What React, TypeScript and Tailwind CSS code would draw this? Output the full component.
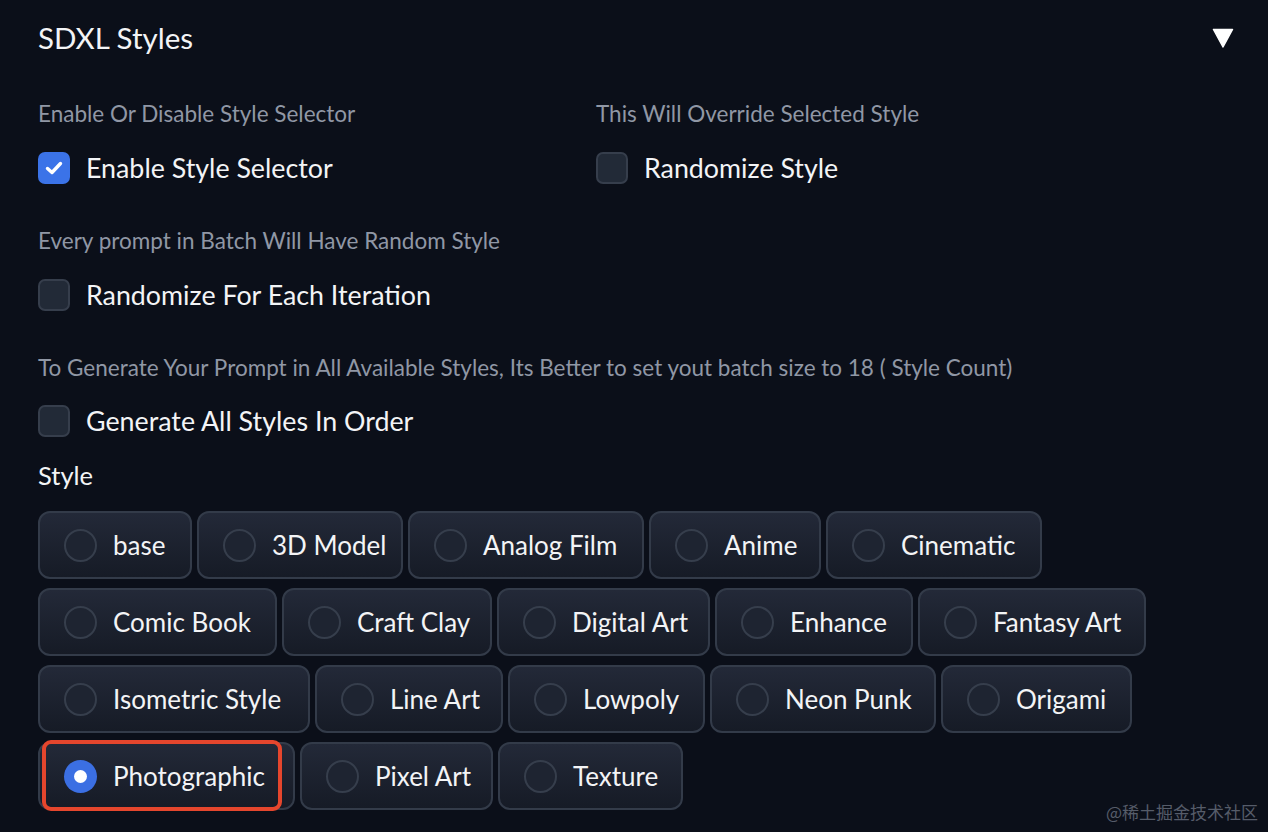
import React from "react";

const rows: { label: string; w: number; selected?: boolean }[][] = [
  [
    { label: "base", w: 154 },
    { label: "3D Model", w: 206 },
    { label: "Analog Film", w: 236 },
    { label: "Anime", w: 172 },
    { label: "Cinematic", w: 216 },
  ],
  [
    { label: "Comic Book", w: 239 },
    { label: "Craft Clay", w: 210 },
    { label: "Digital Art", w: 213 },
    { label: "Enhance", w: 198 },
    { label: "Fantasy Art", w: 228 },
  ],
  [
    { label: "Isometric Style", w: 272 },
    { label: "Line Art", w: 188 },
    { label: "Lowpoly", w: 197 },
    { label: "Neon Punk", w: 226 },
    { label: "Origami", w: 191 },
  ],
  [
    { label: "Photographic", w: 257, selected: true },
    { label: "Pixel Art", w: 193 },
    { label: "Texture", w: 185 },
  ],
];

function Checkbox({ checked }: { checked?: boolean }) {
  if (checked) {
    return (
      <div className="w-[32px] h-[32px] rounded-[7px] bg-[#3b73e8] flex items-center justify-center shrink-0">
        <svg width="22" height="22" viewBox="0 0 22 22" fill="none">
          <path d="M4.5 11.5 L9 15.5 L17.5 6.5" stroke="white" strokeWidth="3.4" strokeLinecap="round" strokeLinejoin="round" />
        </svg>
      </div>
    );
  }
  return <div className="w-[32px] h-[32px] rounded-[7px] bg-[#222a37] border-2 border-[#363e4c] shrink-0" />;
}

function CheckRow({ label, checked }: { label: string; checked?: boolean }) {
  return (
    <div className="flex items-center gap-[16px] h-[32px]">
      <Checkbox checked={checked} />
      <span className="text-[26.8px] leading-[32px] text-[#f3f4f6]">{label}</span>
    </div>
  );
}

function Info({ children }: { children: React.ReactNode }) {
  return <div className="text-[22.5px] leading-[30px] text-[#9097a5] h-[30px] whitespace-nowrap">{children}</div>;
}

export default function App() {
  return (
    <div
      className="w-[1268px] h-[832px] bg-[#0b0f19] relative overflow-hidden"
      style={{ fontFamily: "'Source Sans Pro', Lato, 'Noto Sans', sans-serif" }}
    >
      <div className="pl-[38px] pr-[34px]">
        <div className="flex items-center justify-between h-[40px] mt-[18px]">
          <div className="text-[29.5px] text-[#f3f4f6] leading-[40px]">SDXL Styles</div>
          <svg width="22" height="20" viewBox="0 0 22 20">
            <path d="M1.5 1.5 H20.5 L11 19 Z" fill="white" stroke="white" strokeWidth="1.5" strokeLinejoin="round" />
          </svg>
        </div>

        <div className="grid grid-cols-[558px_1fr] mt-[41px]">
          <div>
            <Info>Enable Or Disable Style Selector</Info>
            <div className="mt-[23px]">
              <CheckRow label="Enable Style Selector" checked />
            </div>
          </div>
          <div>
            <Info>This Will Override Selected Style</Info>
            <div className="mt-[23px]">
              <CheckRow label="Randomize Style" />
            </div>
          </div>
        </div>

        <div className="mt-[42px]">
          <Info>Every prompt in Batch Will Have Random Style</Info>
          <div className="mt-[23px]">
            <CheckRow label="Randomize For Each Iteration" />
          </div>
        </div>

        <div className="mt-[42px]">
          <Info>To Generate Your Prompt in All Available Styles, Its Better to set yout batch size to 18 ( Style Count)</Info>
          <div className="mt-[22px]">
            <CheckRow label="Generate All Styles In Order" />
          </div>
        </div>

        <div className="mt-[23px] text-[25.5px] leading-[30px] text-[#f3f4f6]">Style</div>

        <div className="mt-[21px] flex flex-col gap-[9px]">
          {rows.map((row, i) => (
            <div key={i} className="flex gap-[5px]">
              {row.map((b) => (
                <div
                  key={b.label}
                  className="h-[68px] rounded-[12px] border-2 border-[#333b49] bg-gradient-to-b from-[#232938] to-[#161b26] flex items-center pl-[24px] gap-[16px] shrink-0"
                  style={{ width: b.w }}
                >
                  {b.selected ? (
                    <div className="w-[33px] h-[33px] rounded-full bg-[#3b6fe3] flex items-center justify-center shrink-0">
                      <div className="w-[13px] h-[13px] rounded-full bg-white" />
                    </div>
                  ) : (
                    <div className="w-[33px] h-[33px] rounded-full border-2 border-[#363e4c] bg-[#1e2431] shrink-0" />
                  )}
                  <span className="text-[26px] text-[#f3f4f6] whitespace-nowrap">{b.label}</span>
                </div>
              ))}
            </div>
          ))}
        </div>
      </div>

      <div className="absolute left-[42px] top-[740px] w-[240px] h-[71px] border-[4px] border-[#e5462d] rounded-[9px]" />

      <div
        className="absolute right-[10px] top-[800px] text-[17px] leading-[24px] text-[#565c69]"
        style={{ fontFamily: "'Noto Sans CJK SC', sans-serif" }}
      >
        @稀土掘金技术社区
      </div>
    </div>
  );
}
